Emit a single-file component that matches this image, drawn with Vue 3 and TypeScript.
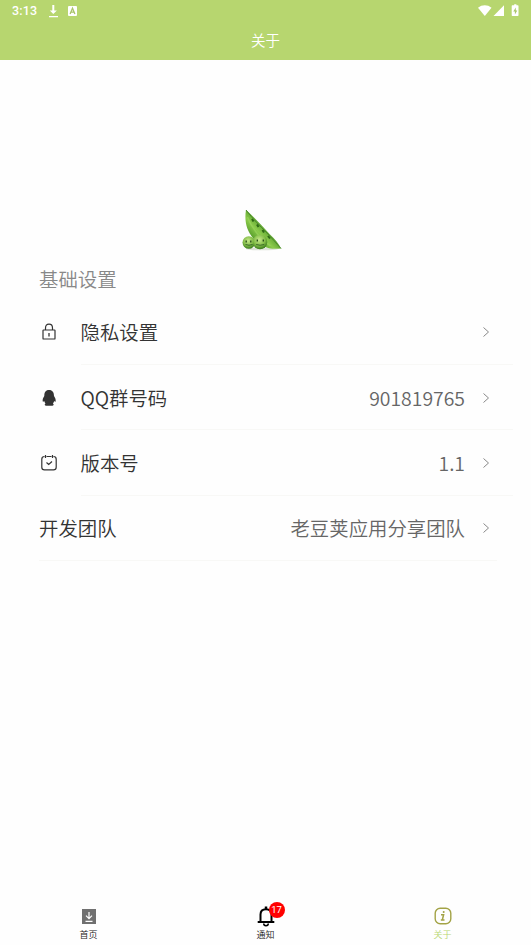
<script setup lang="ts">
interface SettingRow {
  icon: 'lock' | 'qq' | 'calendar' | null
  label: string
  value: string
}

const rows: SettingRow[] = [
  { icon: 'lock', label: '隐私设置', value: '' },
  { icon: 'qq', label: 'QQ群号码', value: '901819765' },
  { icon: 'calendar', label: '版本号', value: '1.1' },
  { icon: null, label: '开发团队', value: '老豆荚应用分享团队' },
]
</script>

<template>
  <div class="screen">
    <header class="header">
      <div class="status">
        <span class="clock">3:13</span>
        <svg class="download" width="11" height="13" viewBox="0 0 11 13" fill="#fff">
          <path d="M4.300 0h2v5.500h2.600L5.300 9 1.800 5.500h2.500zM1 11h9v1.300H1z" />
        </svg>
        <svg class="abox" width="9" height="10" viewBox="0 0 9 10">
          <rect width="9" height="10" rx="1" fill="#fff" />
          <path d="M2.100 8 4.500 2.200 6.900 8M3 6.200h3" fill="none" stroke="#a9c56a" stroke-width="1.300" />
        </svg>
        <svg class="signals" width="42" height="14" viewBox="0 0 42 14" fill="#fff">
          <path d="M0 3.800C4 .5 9.500.5 13.500 3.800L6.800 12z" />
          <path d="M26 1.300V12H15.500z" />
          <path d="M34.400 1.300h1.800V.2h2.200v1.100h1.400q.7 0 .7.700v9.300q0 .7-.7.700h-5.400q-.7 0-.7-.7V2q0-.7.7-.7z" />
          <path d="M37.800 3.500 35.300 7.500h1.600v3l2.400-4h-1.500z" fill="#a9c56a" />
        </svg>
      </div>
      <h1 class="title">关于</h1>
    </header>

    <main class="content">
      <div class="logo">
        <svg width="40" height="42" viewBox="0 0 40 42">
          <defs>
            <linearGradient id="pod" x1=".2" y1=".8" x2=".65" y2=".35">
              <stop offset="0" stop-color="#4c9424" />
              <stop offset=".45" stop-color="#8bcb4b" />
              <stop offset="1" stop-color="#3f861f" />
            </linearGradient>
            <radialGradient id="pea" cx=".45" cy=".35" r=".65">
              <stop offset="0" stop-color="#c6e88a" />
              <stop offset=".6" stop-color="#83bd48" />
              <stop offset="1" stop-color="#397a1b" />
            </radialGradient>
          </defs>
          <ellipse cx="20" cy="40" rx="16" ry="1.300" fill="#dfe4da" />
          <path d="M4 1C2 12 5 22 11 29c6 7 14 12 28 10.500-2-5-6-9-11-14C20 17 12 8 4 1z" fill="url(#pod)" />
          <path d="M4 1c7 9 14 16 20 22s10 11 15 16.500" fill="none" stroke="#47882a" stroke-width="1" />
          <path d="M5.500 8c4 11 11 20 23 29" fill="none" stroke="#a4dc65" stroke-width="1.500" opacity=".5" />
          <path d="m10 10 1.500 2.500m3.500 3 1.500 2.500m4 3 1.500 2.500m4 3.500 2 2.500" stroke="#2f6a15" stroke-width="2" />
          <circle cx="6.800" cy="33.500" r="6.300" fill="url(#pea)" />
          <circle cx="18" cy="33" r="7.300" fill="url(#pea)" />
          <path d="M4.200 31.500v2m4.600-2v2M15.300 30.500v2m6-2v2" stroke="#244a17" stroke-width="1.300" />
          <path d="M3.500 35.500q3.500 1.500 7 0M14.200 35.500q4 1.500 8 0" fill="none" stroke="#39672a" stroke-width="1" />
        </svg>
      </div>
      <h2 class="section">基础设置</h2>
      <ul class="list">
        <li v-for="row in rows" :key="row.label" class="row" :class="{ plain: !row.icon }">
          <span v-if="row.icon" class="icon">
            <svg v-if="row.icon === 'lock'" width="18" height="18" viewBox="0 0 18 18" fill="none" stroke="#333" stroke-width="1.200">
              <rect x="3" y="7" width="12" height="9" rx=".6" />
              <path d="M5.500 7V5Q5.500 1.200 9 1.200T12.500 5v2" />
              <path d="M9 10v3.500" stroke-width="1.300" />
            </svg>
            <svg v-else-if="row.icon === 'qq'" width="18" height="18" viewBox="0 0 18 18" fill="#333">
              <path d="M9 1C5.500 1 4.300 3.500 4.300 7c-1.300 2-2 3.800-1.500 5.600.3.600.9.100 1.400-.6.200 1 .6 1.800 1.300 2.500-1 .4-1.200 2 .4 2.200h6.600c1.600-.2 1.400-1.800.4-2.200.7-.7 1.100-1.500 1.300-2.500.5.700 1.100 1.200 1.400.6C16 10.800 15.300 9 14 7c0-3.500-1.500-6-5-6z" />
            </svg>
            <svg v-else width="18" height="18" viewBox="0 0 18 18" fill="none" stroke="#333" stroke-width="1.200">
              <path d="M4.500 2.500q-2.700 0-2.700 2.700v8q0 2.700 2.700 2.700h9q2.700 0 2.700-2.700v-8q0-2.700-2.700-2.700M6.500 2.500h5M5.500 1v3M12.500 1v3M6.500 8.500l2.200 2 3.300-3" />
            </svg>
          </span>
          <div class="body">
            <span class="label">{{ row.label }}</span>
            <span class="value">{{ row.value }}</span>
            <svg class="chevron" width="8" height="12" viewBox="0 0 8 12" fill="none" stroke="#888" stroke-width="1">
              <path d="m1.500 1.500 5 4.500-5 4.500" />
            </svg>
          </div>
        </li>
      </ul>
    </main>

    <nav class="tabs">
      <div class="tab">
        <svg width="20" height="20" viewBox="0 0 20 20">
          <rect x="3" y="2" width="14" height="15" fill="#707070" />
          <path d="M10 5v6.500M7 8.700l3 3 3-3M6.500 14.300h7" fill="none" stroke="#fff" stroke-width="1.200" />
        </svg>
        <span>首页</span>
      </div>
      <div class="tab">
        <div class="bell">
          <svg width="20" height="22" viewBox="0 0 20 22" fill="none" stroke="#000">
            <path d="M4.500 16.500V9.500Q4.500 4.200 10 4.200t5.500 5.300v7" stroke-width="2" />
            <path d="M1.700 17h16.600" stroke-width="2" />
            <path d="M10 1.500v3" stroke-width="2.500" />
            <path d="M7.700 18.500q0 2.200 2.300 2.200t2.300-2.200" stroke-width="1.500" />
          </svg>
          <span class="badge">17</span>
        </div>
        <span>通知</span>
      </div>
      <div class="tab active">
        <svg width="20" height="20" viewBox="0 0 20 20" fill="none" stroke="#a3a346">
          <rect x="2.200" y="1.200" width="15.600" height="15.600" rx="5" stroke-width="1.400" />
          <path d="M8 7.800h2.600L9.300 13h2.200M7.800 13h2" stroke-width="1.500" />
          <circle cx="10.700" cy="5" r="1" fill="#a3a346" stroke="none" />
        </svg>
        <span>关于</span>
      </div>
    </nav>
  </div>
</template>

<style>
body {
  background: #fefefe;
}
</style>

<style scoped>
.screen {
  display: flex;
  flex-direction: column;
  height: 945px;
  overflow: hidden;
  background: #fefefe;
  font-family: "Noto Sans CJK SC", sans-serif;
  font-weight: 350;
}
.header {
  height: 60px;
  background: #b7d66f;
  color: #fff;
}
.status {
  display: flex;
  align-items: center;
  height: 22px;
  padding: 0 11px 0 12px;
}
.clock {
  width: 36px;
  font: 500 12.5px/22px Roboto, sans-serif;
  letter-spacing: 0.15px;
}
.abox {
  margin-left: 9px;
}
.signals {
  margin-left: auto;
}
.title {
  margin: 0;
  font-size: 14.5px;
  font-weight: 350;
  line-height: 35px;
  text-align: center;
}
.content {
  flex: 1;
}
.logo {
  display: flex;
  justify-content: center;
  padding: 149px 7px 0 0;
}
.section {
  margin: 13px 0 0 39px;
  font-size: 19.4px;
  font-weight: 350;
  line-height: 29px;
  color: #888;
}
.list {
  margin: 6.5px 0 0;
  padding: 0 18px 0 39px;
  list-style: none;
}
.row {
  display: flex;
  height: 65.4px;
}
.icon {
  display: flex;
  align-items: center;
  width: 41px;
  padding-left: 0.5px;
}
.body {
  display: flex;
  flex: 1;
  align-items: center;
  box-sizing: border-box;
  padding-right: 23px;
  border-bottom: 1px solid #f8f8f6;
  font-size: 19.4px;
  line-height: 29px;
}
.plain .body {
  margin-right: 16px;
  padding-right: 7px;
}
.label {
  color: #333;
}
.value {
  margin-left: auto;
  color: #666;
}
.chevron {
  margin: 1px 0 0 17px;
}
.tabs {
  display: flex;
  height: 45px;
}
.tab {
  display: flex;
  flex: 1;
  flex-direction: column;
  align-items: center;
  height: 45px;
  padding-top: 7px;
  box-sizing: border-box;
  font-size: 9px;
  line-height: 15px;
  color: #222;
}
.tab > svg,
.bell {
  flex: none;
  height: 20px;
}
.bell {
  position: relative;
  width: 20px;
}
.bell svg {
  display: block;
  margin-top: -2px;
}
.badge {
  position: absolute;
  top: -5px;
  left: 13px;
  width: 16px;
  height: 16px;
  border-radius: 50%;
  background: #f00;
  color: #fff;
  font: 9.5px/16px Roboto, sans-serif;
  text-align: center;
}
.active {
  color: #b7d66f;
}
</style>
